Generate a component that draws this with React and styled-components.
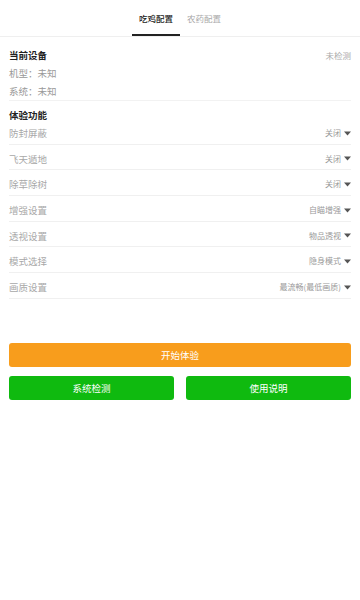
import React, { useState } from "react";
import styled, { createGlobalStyle } from "styled-components";

const GlobalStyle = createGlobalStyle`
  html, body {
    margin: 0;
    padding: 0;
    background: #fff;
  }
  body {
    font-family: "Noto Sans CJK SC", "Noto Sans", sans-serif;
    -webkit-font-smoothing: antialiased;
  }
  * {
    box-sizing: border-box;
  }
`;

const tabs = ["吃鸡配置", "农药配置"];

const features = [
  { label: "防封屏蔽", value: "关闭" },
  { label: "飞天遁地", value: "关闭" },
  { label: "除草除树", value: "关闭" },
  { label: "增强设置", value: "自瞄增强" },
  { label: "透视设置", value: "物品透视" },
  { label: "模式选择", value: "隐身模式" },
  { label: "画质设置", value: "最流畅(最低画质)" },
];

function Caret() {
  return (
    <svg width="7" height="5" viewBox="0 0 7 5">
      <path d="M0 0.5h7L3.5 4.5z" fill="#555" />
    </svg>
  );
}

export default function App() {
  const [active, setActive] = useState(0);

  return (
    <Page>
      <GlobalStyle />

      {/* tab bar */}
      <TabBar>
        {tabs.map((t, i) => (
          <Tab key={t} $active={i === active} onClick={() => setActive(i)}>
            {t}
          </Tab>
        ))}
      </TabBar>

      <Content>
        {/* device info */}
        <DeviceSection>
          <TitleRow>
            <Title>当前设备</Title>
            <Status>未检测</Status>
          </TitleRow>
          <Info>机型：未知</Info>
          <Info>系统：未知</Info>
        </DeviceSection>

        {/* features */}
        <FeatureSection>
          <Title>体验功能</Title>
          <RowList>
            {features.map((f) => (
              <Row key={f.label}>
                <Label>{f.label}</Label>
                <Value>
                  {f.value}
                  <Caret />
                </Value>
              </Row>
            ))}
          </RowList>
        </FeatureSection>

        <Actions>
          <Button $color="#f89d1c">开始体验</Button>
          <ButtonPair>
            <Button $color="#0fba0f">系统检测</Button>
            <Button $color="#0fba0f">使用说明</Button>
          </ButtonPair>
        </Actions>
      </Content>
    </Page>
  );
}

const Page = styled.div`
  width: 100%;
  min-height: 600px;
  background: #fff;
`;

const TabBar = styled.div`
  display: flex;
  justify-content: center;
  height: 37px;
  border-bottom: 1px solid #efefef;
`;

const Tab = styled.div`
  width: 48px;
  height: 36px;
  display: flex;
  align-items: center;
  justify-content: center;
  padding-top: 2px;
  font-size: 8.5px;
  color: ${({ $active }) => ($active ? "#222" : "#aaa")};
  font-weight: ${({ $active }) => ($active ? 500 : 400)};
  border-bottom: 2px solid ${({ $active }) => ($active ? "#222" : "transparent")};
  cursor: pointer;
`;

const Content = styled.div`
  padding: 0 9px;
`;

const DeviceSection = styled.section`
  padding-top: 9px;
  border-bottom: 1px solid #f2f2f2;
`;

const TitleRow = styled.div`
  display: flex;
  justify-content: space-between;
  align-items: center;
`;

const Title = styled.div`
  font-size: 9.5px;
  line-height: 18px;
  font-weight: 700;
  color: #222;
`;

const Status = styled.span`
  font-size: 8.5px;
  color: #aaa;
`;

const Info = styled.div`
  font-size: 9.5px;
  line-height: 18px;
  color: #999;
`;

const FeatureSection = styled.section`
  padding-top: 5px;

  ${Title} {
    line-height: 18px;
  }
`;

const RowList = styled.div`
  display: flex;
  flex-direction: column;
`;

const Row = styled.div`
  display: flex;
  justify-content: space-between;
  align-items: center;
  padding: 6px 0 2.7px;
  line-height: 16px;
  border-bottom: 1px solid #f0f0f0;

  &:first-child {
    padding-top: 1px;
  }
`;

const Label = styled.span`
  font-size: 9.5px;
  color: #a8a8a8;
`;

const Value = styled.span`
  display: flex;
  align-items: center;
  gap: 3px;
  font-size: 8px;
  color: #999;
`;

const Actions = styled.div`
  display: flex;
  flex-direction: column;
  gap: 9px;
  margin-top: 44px;
`;

const ButtonPair = styled.div`
  display: grid;
  grid-template-columns: 1fr 1fr;
  gap: 12px;
`;

const Button = styled.button`
  height: 24px;
  border: none;
  border-radius: 3px;
  background: ${({ $color }) => $color};
  color: #fff;
  font-family: inherit;
  font-size: 9.5px;
  padding: 0;
  cursor: pointer;
`;
